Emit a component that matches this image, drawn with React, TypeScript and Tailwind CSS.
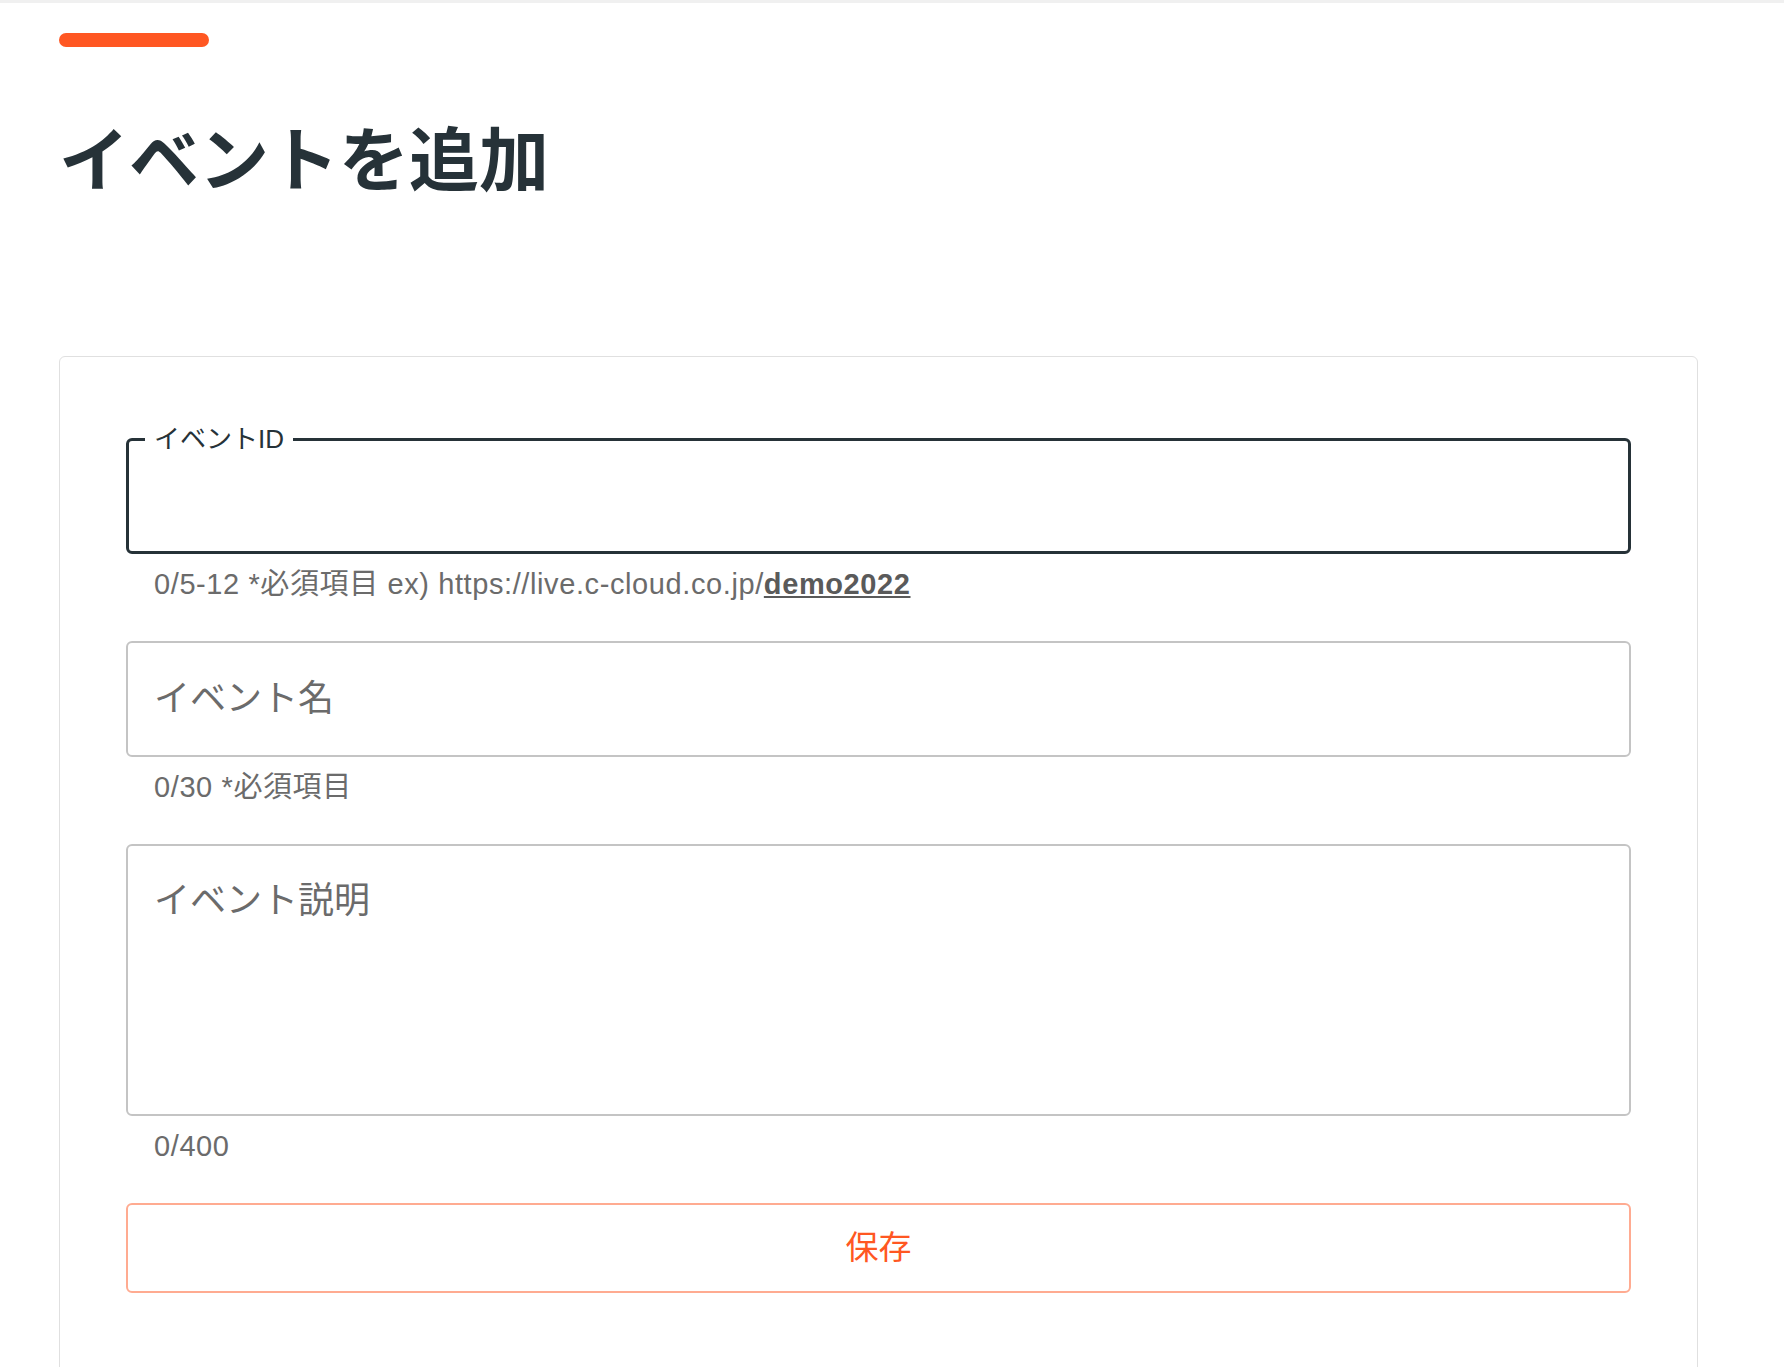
import React from 'react';

const font = { fontFamily: '"Liberation Sans", "Noto Sans CJK JP", sans-serif' };

function Helper({ children }: { children: React.ReactNode }) {
    return (
        <div className="px-[28px] pt-[13px] pb-[40px] text-[29px] leading-[34px] tracking-[0.6px] text-[#6b6b6b]">
            {children}
        </div>
    );
}

export default function App() {
    return (
        <div className="min-h-screen bg-white" style={font}>
            <div className="h-[3px] bg-[#f0f0f0]"></div>
            <div className="pl-[59px]">
                <div className="mt-[30px] h-[14px] w-[150px] rounded-full bg-[#ff5722]"></div>
                <h1
                    className="mt-[69px] text-[70px] leading-[80px] font-bold text-[#263238]"
                    style={{ fontFamily: '"Noto Sans CJK JP", sans-serif' }}
                >
                    イベントを追加
                </h1>

                <div className="mt-[160px] w-[1639px] rounded-md border border-[#e0e0e0] px-[66px] pt-[81px] pb-[120px]">
                    {/* event id - focused */}
                    <div className="relative h-[116px] rounded-[6px] border-[3px] border-[#263238]">
                        <span className="absolute -top-[15px] left-[16px] bg-white px-[9px] text-[26px] leading-[27px] text-[#263238]">
                            イベントID
                        </span>
                    </div>
                    <Helper>
                        0/5-12 *必須項目 ex) https://live.c-cloud.co.jp/
                        <span className="font-bold text-[#5a5a5a] underline">demo2022</span>
                    </Helper>

                    {/* event name */}
                    <div className="flex h-[116px] items-center rounded-[6px] border-2 border-[#c4c4c4] px-[26px]">
                        <span className="text-[36px] text-[#6b6b6b]">イベント名</span>
                    </div>
                    <Helper>0/30 *必須項目</Helper>

                    {/* description */}
                    <div className="h-[272px] rounded-[6px] border-2 border-[#c4c4c4] px-[26px] pt-[33px]">
                        <span className="text-[36px] leading-[44px] text-[#6b6b6b]">イベント説明</span>
                    </div>
                    <Helper>0/400</Helper>

                    <button className="flex h-[90px] w-full items-center justify-center rounded-[6px] border-2 border-[#ffab91] text-[33px] text-[#ff5722]">
                        保存
                    </button>
                </div>
            </div>
        </div>
    );
}
